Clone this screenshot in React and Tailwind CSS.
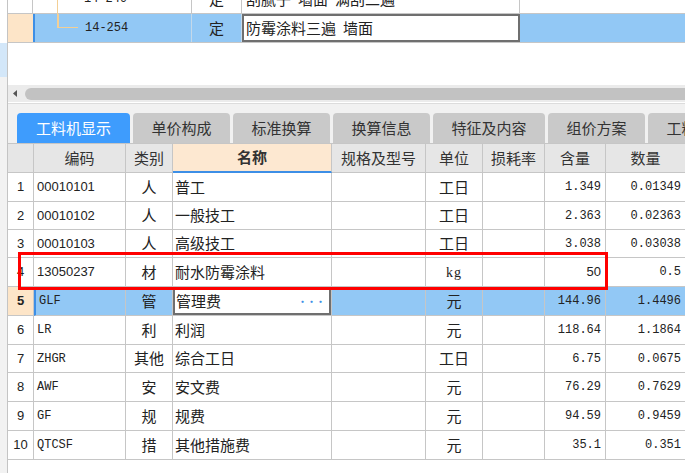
const cols = ['w-[26px]', 'w-[92px]', 'w-[47px]', 'w-[159px]', 'w-[94px]', 'w-[57px]', 'w-[62px]', 'w-[61px]', 'w-[80px]'];

const rows = [
  { n: 1, code: '00010101', type: '人', name: '普工', unit: '工日', amt: '1.349', qty: '0.01349', h: 'h-[29px]' },
  { n: 2, code: '00010102', type: '人', name: '一般技工', unit: '工日', amt: '2.363', qty: '0.02363', h: 'h-[28px]' },
  { n: 3, code: '00010103', type: '人', name: '高级技工', unit: '工日', amt: '3.038', qty: '0.03038', h: 'h-[28px]' },
  { n: 4, code: '13050237', type: '材', name: '耐水防霉涂料', unit: 'kg', amt: '50', qty: '0.5', h: 'h-[29px]' },
  { n: 5, code: 'GLF', type: '管', name: '管理费', unit: '元', amt: '144.96', qty: '1.4496', h: 'h-[29px]', sel: true },
  { n: 6, code: 'LR', type: '利', name: '利润', unit: '元', amt: '118.64', qty: '1.1864', h: 'h-[29px]' },
  { n: 7, code: 'ZHGR', type: '其他', name: '综合工日', unit: '工日', amt: '6.75', qty: '0.0675', h: 'h-[28px]' },
  { n: 8, code: 'AWF', type: '安', name: '安文费', unit: '元', amt: '76.29', qty: '0.7629', h: 'h-[29px]' },
  { n: 9, code: 'GF', type: '规', name: '规费', unit: '元', amt: '94.59', qty: '0.9459', h: 'h-[29px]' },
  { n: 10, code: 'QTCSF', type: '措', name: '其他措施费', unit: '元', amt: '35.1', qty: '0.351', h: 'h-[29px]' },
];

const tabs = [
  { label: '工料机显示', w: 'w-[113px]', active: true },
  { label: '单价构成', w: 'w-[97px]' },
  { label: '标准换算', w: 'w-[97px]' },
  { label: '换算信息', w: 'w-[97px]' },
  { label: '特征及内容', w: 'w-[112px]' },
  { label: '组价方案', w: 'w-[97px]' },
  { label: '工料机汇总', w: 'w-[112px]' },
];

const headers = ['', '编码', '类别', '名称', '规格及型号', '单位', '损耗率', '含量', '数量'];

const cell = 'shrink-0 h-full border-r border-b border-[#c6c6c6] flex items-center overflow-hidden whitespace-nowrap';

const Row = ({ r }) => {
  const bg = r.sel ? 'bg-[#92c8f5]' : 'bg-white';
  const mono = r.n >= 5;
  return (
    <div className={`flex ${r.h} text-[#222]`}>
      <div className={`${cell} ${cols[0]} justify-center font-['Liberation_Sans'] text-[13px] ${r.sel ? 'bg-[#fde5c8] font-bold' : 'bg-white'}`}>
        {r.n}
      </div>
      <div className={`${cell} ${cols[1]} ${bg} pl-[3px] ${r.sel ? 'border-l-2 border-l-[#3d8fe6] pl-[1px]' : ''} ${mono ? "font-['Liberation_Mono'] text-[12px]" : "font-['Liberation_Sans'] text-[13px]"}`}>
        {r.code}
      </div>
      <div className={`${cell} ${cols[2]} ${bg} justify-center text-[15px]`}>{r.type}</div>
      <div className={`${cell} ${cols[3]} ${bg} text-[15px]`}>
        {r.sel ? (
          <div className="w-full h-full bg-white border-2 border-[#6f6f6f] flex items-center pl-[1px]">
            <span className="flex-1">{r.name}</span>
            <span className="text-[#3d8fe6] text-[9px] font-bold pr-[4px] leading-none">•••</span>
          </div>
        ) : (
          <span className="pl-[2px]">{r.name}</span>
        )}
      </div>
      <div className={`${cell} ${cols[4]} ${bg}`}></div>
      <div className={`${cell} ${cols[5]} ${bg} justify-center ${r.unit === 'kg' ? "font-['Liberation_Serif'] text-[14px] tracking-[1px]" : 'text-[15px]'}`}>
        {r.unit}
      </div>
      <div className={`${cell} ${cols[6]} ${bg}`}></div>
      <div className={`${cell} ${cols[7]} ${bg} justify-end pr-[4px] ${r.amt === '50' ? "font-['Liberation_Sans'] text-[13px]" : "font-['Liberation_Mono'] text-[12px]"}`}>
        {r.amt}
      </div>
      <div className={`${cell} ${cols[8]} ${bg} justify-end pr-[4px] font-['Liberation_Mono'] text-[12px]`}>{r.qty}</div>
    </div>
  );
};

export default function App() {
  return (
    <div className="relative w-[685px] h-[473px] overflow-hidden flex bg-white font-['Noto_Sans_CJK_SC',sans-serif] text-[#222]">
      <div className="w-[8px] shrink-0 flex flex-col border-r border-[#c4c4c4]">
        <div className="h-[43px] bg-white"></div>
        <div className="h-[34px] bg-[#d3e7f9]"></div>
        <div className="flex-1 bg-[#f2f2f2]"></div>
      </div>

      <div className="flex-1 flex flex-col overflow-hidden">
        {/* upper grid */}
        <div className="h-[43px] overflow-hidden">
          <div className="mt-[-15px]">
            <div className="flex h-[29px] border-b border-[#c6c6c6] bg-white">
              <div className="w-[25px] shrink-0 border-r border-[#c6c6c6]"></div>
              <div className="relative w-[159px] shrink-0 border-r border-[#c6c6c6] flex items-center pl-[51px] font-['Liberation_Mono'] text-[12px]">
                <div className="absolute left-[24px] top-0 bottom-[-15px] w-px bg-[#f3cf95]"></div>
                14-249
              </div>
              <div className="w-[50px] shrink-0 border-r border-[#c6c6c6] flex items-center justify-center text-[15px]">定</div>
              <div className="w-[278px] shrink-0 border-r border-[#c6c6c6] flex items-center gap-[7px] pl-[4px] text-[15px] whitespace-nowrap">
                <span>刮腻子</span>
                <span>墙面</span>
                <span>满刮二遍</span>
              </div>
              <div className="flex-1"></div>
            </div>
            <div className="flex h-[29px] border-b border-[#c6c6c6] bg-[#92c8f5]">
              <div className="w-[25px] shrink-0 bg-[#fde5c8]"></div>
              <div className="relative w-[159px] shrink-0 border-l-2 border-[#3d8fe6] border-r border-r-[#c4d9ea] flex items-center pl-[50px] font-['Liberation_Mono'] text-[12px]">
                <div className="absolute left-[23px] top-0 h-[14px] w-[20px] border-l border-b border-[#f3cf95]"></div>
                14-254
              </div>
              <div className="w-[50px] shrink-0 border-r border-[#c4d9ea] flex items-center justify-center text-[15px]">定</div>
              <div className="w-[278px] shrink-0 bg-white border-2 border-[#6f6f6f] flex items-center gap-[7px] pl-[2px] text-[15px] whitespace-nowrap">
                <span>防霉涂料三遍</span>
                <span>墙面</span>
              </div>
              <div className="flex-1"></div>
            </div>
          </div>
        </div>

        <div className="h-[42px] bg-white"></div>

        {/* horizontal scrollbar */}
        <div className="h-[17px] bg-[#ebebeb] flex items-center">
          <svg width="17" height="17" viewBox="0 0 17 17" className="shrink-0">
            <path d="M9 5 L5 8.5 L9 12 Z" fill="#555" />
          </svg>
          <div className="flex-1 h-[12px] bg-[#c2c2c2] rounded-l-[6px]"></div>
        </div>
        <div className="h-px bg-white"></div>
        <div className="h-px bg-[#dcdcdc]"></div>

        {/* tabs */}
        <div className="h-[39px] bg-[#f1f1f1] flex items-end gap-[3px] pl-[9px]">
          {tabs.map((t) => (
            <div
              key={t.label}
              className={`${t.w} h-[30px] shrink-0 rounded-t-[4px] flex items-center justify-center text-[15px] ${
                t.active ? 'bg-[#3e9cfd] text-white' : 'bg-[#c9c9c9] text-[#333]'
              }`}
            >
              {t.label}
            </div>
          ))}
        </div>

        {/* header */}
        <div className="flex h-[30px] border-t border-[#c6c6c6] bg-[#e6e6e6] text-[15px] text-[#333]">
          {headers.map((h, i) => (
            <div
              key={i}
              className={`${cell} ${cols[i]} justify-center ${
                i === 3 ? 'bg-[#fde8d1] font-bold border-b-2 border-b-[#3d8fe6]' : ''
              }`}
            >
              {h}
            </div>
          ))}
        </div>

        {rows.map((r) => (
          <Row key={r.n} r={r} />
        ))}
      </div>

      <div className="absolute left-[18px] top-[252px] w-[590px] h-[38px] border-[3px] border-[#ff0000]"></div>
    </div>
  );
}
